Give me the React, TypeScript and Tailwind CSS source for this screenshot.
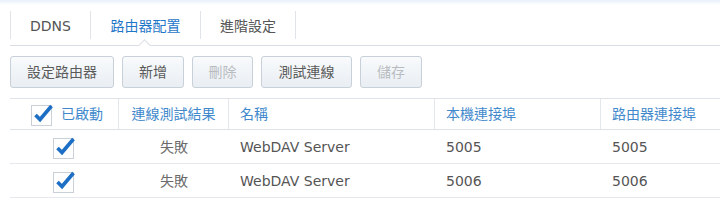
import React from "react";

const font = { fontFamily: '"DejaVu Sans", "Noto Sans CJK TC", sans-serif' };

function Check() {
  return (
    <svg width="24" height="24" viewBox="0 0 24 24" className="block">
      <rect x="0.5" y="3.5" width="20" height="20" fill="#fff" stroke="#c9d0d8" />
      <path d="M4.5 13 L9 17.5 L20.5 4" fill="none" stroke="#1c6fc4" strokeWidth="3.6" strokeLinecap="butt" strokeLinejoin="miter" />
    </svg>
  );
}

const tabs = [
  { label: "DDNS", w: "w-[79px]", active: false },
  { label: "路由器配置", w: "w-[109px]", active: true },
  { label: "進階設定", w: "w-[94px]", active: false },
];

const buttons = [
  { label: "設定路由器", w: "w-[104px]", disabled: false },
  { label: "新增", w: "w-[62px]", disabled: false },
  { label: "刪除", w: "w-[61px]", disabled: true },
  { label: "測試連線", w: "w-[91px]", disabled: false },
  { label: "儲存", w: "w-[62px]", disabled: true },
];

const rows = [
  { result: "失敗", name: "WebDAV Server", local: "5005", router: "5005" },
  { result: "失敗", name: "WebDAV Server", local: "5006", router: "5006" },
];

export default function App() {
  return (
    <div className="w-[720px] h-[203px] overflow-hidden bg-white text-[14px] text-[#555]" style={font}>
      <div className="h-[5px] bg-gradient-to-b from-[#e8f0f8] to-white" />

      {/* tabs */}
      <div className="relative ml-[10px] flex h-[41px] items-center border-b border-[#d9dee4]">
        <span className="h-[28px] w-px bg-[#e0e4e8]" />
        {tabs.map((t) => (
          <React.Fragment key={t.label}>
            <div className={`${t.w} flex h-full items-center justify-center pt-[3px] ${t.active ? "text-[#1f77c8]" : "text-[#555]"}`}>
              {t.label}
            </div>
            <span className="h-[28px] w-px bg-[#e0e4e8]" />
          </React.Fragment>
        ))}
        <div className="absolute bottom-[-5px] left-[130px] h-[9px] w-[9px] rotate-45 border-l border-t border-[#d9dee4] bg-white" />
      </div>

      {/* toolbar */}
      <div className="ml-[10px] mt-[10px] flex gap-[8px]">
        {buttons.map((b) => (
          <div
            key={b.label}
            className={`${b.w} flex h-[32px] items-center justify-center rounded-[3px] border border-[#c8d0d9] bg-gradient-to-b from-[#f8fafc] to-[#e9eef3] ${b.disabled ? "text-[#b8bcc0]" : "text-[#5a5a5a]"}`}
          >
            {b.label}
          </div>
        ))}
      </div>

      {/* grid */}
      <div className="ml-[10px] mt-[10px]">
        <div className="grid h-[32px] grid-cols-[109px_110px_206px_166px_1fr] border-y border-[#dde3e9] text-[#4189cc]">
          <div className="flex items-center gap-[6px] border-r border-[#e3e8ed] pl-[21px]">
            <Check />
            <span>已啟動</span>
          </div>
          <div className="flex items-center justify-center border-r border-[#e3e8ed]">連線測試結果</div>
          <div className="flex items-center border-r border-[#e3e8ed] pl-[11px]">名稱</div>
          <div className="flex items-center border-r border-[#e3e8ed] pl-[11px]">本機連接埠</div>
          <div className="flex items-center pl-[11px]">路由器連接埠</div>
        </div>
        {rows.map((r, i) => (
          <div key={i} className="grid h-[34px] grid-cols-[109px_110px_206px_166px_1fr] border-b border-[#e5e9ed]">
            <div className="flex items-center justify-center pl-[1px]">
              <Check />
            </div>
            <div className="flex items-center justify-center pt-[1px] text-[#6a6a6a]">{r.result}</div>
            <div className="flex items-center pl-[11px] pt-[1px]">{r.name}</div>
            <div className="flex items-center pl-[11px] pt-[1px]">{r.local}</div>
            <div className="flex items-center pl-[11px] pt-[1px]">{r.router}</div>
          </div>
        ))}
      </div>
    </div>
  );
}
